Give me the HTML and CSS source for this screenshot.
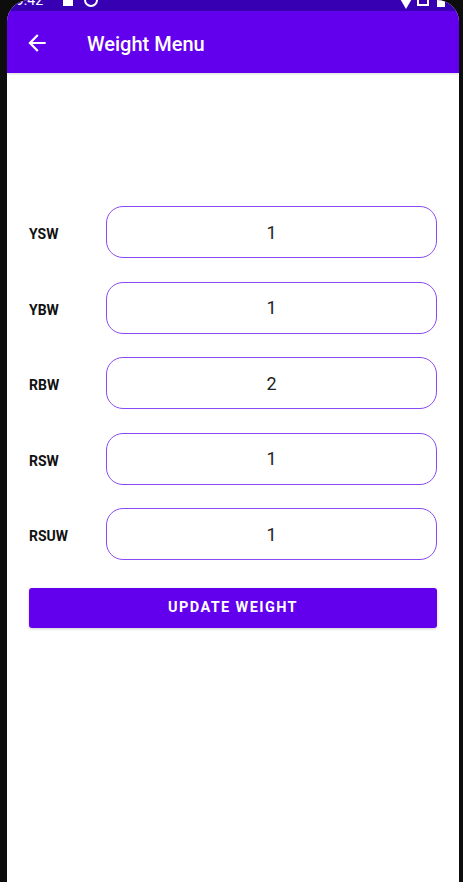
FILE: index.html
```html
<!DOCTYPE html>
<html>
<head>
<meta charset="utf-8">
<link rel="stylesheet" href="styles.css">
</head>
<body>
<div class="frame">
  <div class="screen">
    <div class="status">
      <div class="status-inner">
        <span class="time">9:42</span>
        <span class="sq"></span>
        <span class="circ"></span>
        <span class="spacer"></span>
        <span class="tri"></span>
        <span class="sig"></span>
        <span class="bat"></span>
      </div>
    </div>
    <div class="appbar">
      <svg class="back" width="26" height="26" viewBox="0 0 24 24"><path d="M20 11H7.830l5.59-5.59L12 4l-8 8 8 8 1.41-1.410L7.83 13H20v-2z" fill="#fff"/></svg>
      <span class="title">Weight Menu</span>
    </div>
    <div class="content">
      <div class="row"><span class="label">YSW</span><div class="field">1</div></div>
      <div class="row"><span class="label">YBW</span><div class="field">1</div></div>
      <div class="row"><span class="label">RBW</span><div class="field">2</div></div>
      <div class="row"><span class="label">RSW</span><div class="field">1</div></div>
      <div class="row"><span class="label">RSUW</span><div class="field">1</div></div>
      <button class="btn">UPDATE WEIGHT</button>
    </div>
  </div>
</div>
</body>
</html>
```
FILE: styles.css
```css
html, body {
  margin: 0;
  padding: 0;
  background: #0d0d0d;
  height: 882px;
  overflow: hidden;
}
.frame {
  width: 463px;
  height: 882px;
  padding-left: 7px;
  box-sizing: border-box;
}
.screen {
  width: 452px;
  height: 882px;
  background: #fff;
  border-radius: 22px 22px 0 0;
  overflow: hidden;
  display: flex;
  flex-direction: column;
  font-family: Roboto, "Noto Sans", sans-serif;
}
.status {
  height: 11px;
  background: #3700b3;
  overflow: hidden;
  flex: none;
}
.status-inner {
  display: flex;
  align-items: center;
  height: 22px;
  margin-top: -11px;
  padding: 0 14px 0 9px;
  color: #fff;
  font-size: 14px;
}
.time { width: 47px; }
.sq { width: 10px; height: 12px; background: #fff; }
.circ { width: 10px; height: 10px; border: 2px solid #fff; border-radius: 50%; margin-left: 11px; }
.spacer { flex: 1; }
.tri { width: 0; height: 0; border-left: 7px solid transparent; border-right: 7px solid transparent; border-top: 12px solid #fff; margin-top: 6px; }
.sig { width: 12px; height: 12px; border: 2px solid #fff; margin-left: 4px; box-sizing: border-box; }
.bat { width: 8px; height: 14px; background: #fff; margin-left: 8px; }
.appbar {
  height: 62px;
  background: #6200ee;
  flex: none;
  display: flex;
  align-items: center;
  padding-left: 17px;
  box-shadow: 0 1px 2px rgba(0,0,0,0.15);
  position: relative;
  z-index: 1;
}
.back { margin-top: 2px; }
.title {
  color: #fff;
  font-size: 20px;
  font-weight: 500;
  margin-left: 37px;
  margin-top: 4px;
}
.content {
  padding: 133px 22px 0 22px;
  display: flex;
  flex-direction: column;
}
.row {
  display: flex;
  align-items: center;
  height: 52px;
  margin-bottom: 23.5px;
}
.label {
  width: 77px;
  font-size: 14px;
  font-weight: 700;
  color: #111;
  margin-top: 4px;
}
.field {
  flex: 1;
  height: 52px;
  box-sizing: border-box;
  border: 1.5px solid #8a4af3;
  border-radius: 17px;
  display: flex;
  align-items: center;
  justify-content: center;
  font-size: 18px;
  color: #222;
}
.btn {
  margin-top: 4px;
  height: 40px;
  background: #6200ee;
  color: #fff;
  border: none;
  border-radius: 3px;
  font-family: Roboto, "Noto Sans", sans-serif;
  font-size: 14.5px;
  font-weight: 700;
  letter-spacing: 1.4px;
  box-shadow: 0 1px 3px rgba(0,0,0,0.2);
  padding: 0;
}
```
